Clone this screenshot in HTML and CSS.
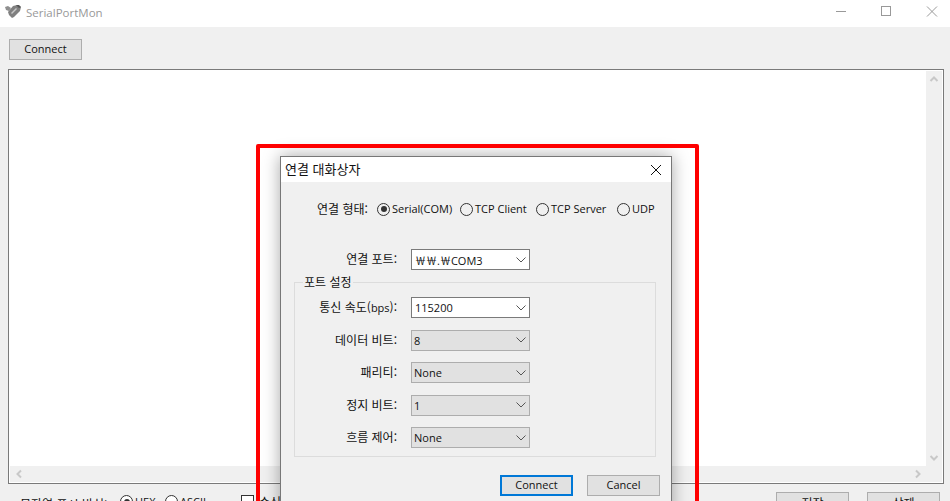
FILE: index.html
```html
<!DOCTYPE html>
<html lang="ko">
<head>
<meta charset="utf-8">
<title>SerialPortMon</title>
<link rel="stylesheet" href="styles.css">
</head>
<body>
<div class="app">
  <header class="titlebar">
    <svg class="app-icon" width="16" height="13" viewBox="0 0 16 13"><path d="M0 2l3-1 3 2-2 3-3-1z" fill="#8f8f8f"/><path d="M3 7l5-6 4-1 4 2-1 4-6 6-2 1-3-3z" fill="#808080"/><path d="M6 8l5-5 1 1-5 5z" fill="#c8c8c8"/><path d="M11 0l3 0 2 2-2 1z" fill="#555"/></svg>
    <span class="app-title">SerialPortMon</span>
    <div class="win-controls">
      <svg width="12" height="12" viewBox="0 0 12 12"><path d="M2 5.500h10" stroke="#999" fill="none"/></svg>
      <svg width="12" height="12" viewBox="0 0 12 12"><rect x="1.500" y="0.500" width="9" height="9" stroke="#999" fill="none"/></svg>
      <svg width="12" height="12" viewBox="0 0 12 12"><path d="M1 0.500l10 10M11 0.500l-10 10" stroke="#999" fill="none"/></svg>
    </div>
  </header>
  <div class="toolbar"><button class="btn latin">Connect</button></div>
  <div class="log">
    <div class="log-text"></div>
    <div class="vbar">
      <svg width="16" height="16" viewBox="0 0 16 16"><path d="M4.500 10l3.500-3.500 3.500 3.500" stroke="#c8c8c8" stroke-width="2" fill="none"/></svg>
      <svg width="16" height="16" viewBox="0 0 16 16"><path d="M4.500 6l3.500 3.500 3.500-3.500" stroke="#c8c8c8" stroke-width="2" fill="none"/></svg>
    </div>
    <div class="hbar">
      <svg width="16" height="16" viewBox="0 0 16 16"><path d="M10 4.500l-3.500 3.500 3.500 3.500" stroke="#c8c8c8" stroke-width="2" fill="none"/></svg>
      <svg width="16" height="16" viewBox="0 0 16 16"><path d="M6 4.500l3.500 3.500-3.500 3.500" stroke="#c8c8c8" stroke-width="2" fill="none"/></svg>
    </div>
    <div class="corner"></div>
  </div>
  <footer class="bottom">
    <span class="bottom-label">문자열 표시 방식:</span>
    <span class="radio latin bottom-hex"><i class="dot on"></i>HEX</span>
    <span class="radio latin bottom-ascii"><i class="dot"></i>ASCII</span>
    <span class="radio bottom-check"><i class="box"></i>수신</span>
    <button class="btn bottom-save">저장</button>
    <button class="btn bottom-del">삭제</button>
  </footer>
</div>

<section class="dialog">
  <div class="dlg-title">
    <span class="dlg-title-text">연결 대화상자</span>
    <svg width="12" height="12" viewBox="0 0 12 12"><path d="M1 1l10 10M11 1l-10 10" stroke="#111" fill="none"/></svg>
  </div>
  <div class="dlg-body">
    <div class="type-row">
      <span class="type-label">연결 형태:</span>
      <span class="radio latin"><i class="dot on"></i>Serial(COM)</span>
      <span class="radio latin"><i class="dot"></i>TCP Client</span>
      <span class="radio latin"><i class="dot"></i>TCP Server</span>
      <span class="radio latin"><i class="dot"></i>UDP</span>
    </div>
    <div class="field port-row">
      <label>연결 포트:</label>
      <div class="select white latin"><span><span class="won">₩₩</span>.<span class="won">₩</span>COM3</span><svg width="10" height="6" viewBox="0 0 10 6"><path d="M0.500 0.500l4.500 4.500 4.500-4.500" stroke="#555" fill="none"/></svg></div>
    </div>
    <div class="group">
      <span class="group-label">포트 설정</span>
      <div class="field">
        <label>통신 속도(<span class="latin">bps</span>):</label>
        <div class="select white latin">115200<svg width="10" height="6" viewBox="0 0 10 6"><path d="M0.500 0.500l4.500 4.500 4.500-4.500" stroke="#555" fill="none"/></svg></div>
      </div>
      <div class="field">
        <label>데이터 비트:</label>
        <div class="select latin">8<svg width="10" height="6" viewBox="0 0 10 6"><path d="M0.500 0.500l4.500 4.500 4.500-4.500" stroke="#555" fill="none"/></svg></div>
      </div>
      <div class="field">
        <label>패리티:</label>
        <div class="select latin">None<svg width="10" height="6" viewBox="0 0 10 6"><path d="M0.500 0.500l4.500 4.500 4.500-4.500" stroke="#555" fill="none"/></svg></div>
      </div>
      <div class="field">
        <label>정지 비트:</label>
        <div class="select latin">1<svg width="10" height="6" viewBox="0 0 10 6"><path d="M0.500 0.500l4.500 4.500 4.500-4.500" stroke="#555" fill="none"/></svg></div>
      </div>
      <div class="field">
        <label>흐름 제어:</label>
        <div class="select latin">None<svg width="10" height="6" viewBox="0 0 10 6"><path d="M0.500 0.500l4.500 4.500 4.500-4.500" stroke="#555" fill="none"/></svg></div>
      </div>
    </div>
    <div class="dlg-actions">
      <button class="btn latin default">Connect</button>
      <button class="btn latin">Cancel</button>
    </div>
  </div>
</section>

<div class="callout"></div>
</body>
</html>
```

FILE: styles.css
```css
* { box-sizing: border-box; }
html, body {
  margin: 0;
  height: 501px;
  overflow: hidden;
  background: #f0f0f0;
  font-family: "Noto Sans CJK KR", sans-serif;
  font-size: 12px;
  color: #111;
}
.app { display: flex; flex-direction: column; height: 530px; }
.titlebar {
  height: 27px;
  background: #fff;
  display: flex;
  align-items: center;
  padding-left: 5px;
  flex: none;
}
.app-icon { margin: 0 5px 5px 0; }
.app-title { color: #999; font-family: "Open Sans", sans-serif; font-size: 11.500px; padding-bottom: 3px; }
.win-controls { margin-left: auto; display: flex; gap: 34px; padding-right: 12px; margin-top: -3px; }
.toolbar { height: 42px; padding: 12px 0 0 9px; flex: none; }
.btn {
  width: 73px;
  height: 21px;
  padding: 0;
  background: #e1e1e1;
  border: 1px solid #adadad;
  font: inherit;
  color: #111;
  display: flex;
  align-items: center;
  justify-content: center;
}
.btn.default { border: 2px solid #0078d7; }
.btn.latin, .latin { font-family: "Open Sans", sans-serif; font-size: 11px; }
.btn.latin { padding-bottom: 2px; }
.log {
  height: 415px;
  flex: none;
  margin: 0 6px 0 8px;
  border: 1px solid #7a7a7a;
  background: #fff;
  padding: 1px;
  display: grid;
  grid-template-columns: 1fr 16px;
  grid-template-rows: 1fr 16px;
}
.vbar, .hbar, .corner { background: #f0f0f0; display: flex; justify-content: space-between; }
.vbar { flex-direction: column; }
.hbar svg:first-child { margin-left: 1px; }
.bottom { position: relative; height: 40px; flex: none; display: flex; padding-top: 8px; }
.bottom-label { margin: 3px 0 0 20px; width: 100px; }
.radio { display: inline-flex; align-items: center; gap: 2px; height: 16px; padding-bottom: 2px; }
.radio .dot, .radio .box { margin-top: 1px; }
.bottom .radio { margin-top: 2px; }
.bottom-hex { width: 45px; }
.bottom-ascii { width: 76px; }
.bottom-check { width: 100px; gap: 5px; }
.bottom-save { margin-left: auto; }
.bottom-del { margin: 0 10px 0 18px; }
.dot {
  width: 13px;
  height: 13px;
  border: 1px solid #333;
  border-radius: 50%;
  background: #fff;
  display: inline-block;
  flex: none;
  position: relative;
}
.dialog .dot { background: transparent; }
.dot.on::after {
  content: "";
  position: absolute;
  left: 2.500px;
  top: 2.500px;
  width: 6px;
  height: 6px;
  border-radius: 50%;
  background: #333;
}
.box { width: 13px; height: 13px; border: 1px solid #333; background: #fff; flex: none; }
.dialog {
  position: absolute;
  left: 280px;
  top: 156px;
  width: 392px;
  height: 360px;
  background: #f0f0f0;
  border: 1px solid #777;
  box-shadow: 0 0 16px rgba(0, 0, 0, 0.35);
}
.dlg-title {
  height: 25px;
  background: #fff;
  display: flex;
  align-items: center;
  justify-content: space-between;
  padding: 0 9px 0 4px;
  font-size: 13px;
}
.dlg-title-text { padding-bottom: 2px; }
.dlg-body { display: flex; flex-direction: column; padding: 18px 11px 0 13px; }
.type-row {
  display: grid;
  grid-template-columns: 60px 83px 76px 81px auto;
  align-items: center;
  height: 16px;
  padding-left: 23px;
}
.type-label { padding-bottom: 2px; }
.field { display: grid; grid-template-columns: 102px 119px; column-gap: 14px; align-items: center; }
.field label { text-align: right; padding-bottom: 2px; }
.port-row { margin: 33px 0 0 1px; }
.select {
  height: 21px;
  background: #e1e1e1;
  border: 1px solid #adadad;
  display: flex;
  align-items: center;
  justify-content: space-between;
  padding: 0 3px 0 2px;
}
.select.white { background: #fff; border-color: #7a7a7a; padding-left: 3px; }
.won { font-family: "Noto Sans CJK KR", sans-serif; font-feature-settings: "fwid"; }
.group {
  position: relative;
  margin-top: 12px;
  width: 362px;
  height: 175px;
  border: 1px solid #dcdcdc;
  padding: 14px 0 0 0;
  display: flex;
  flex-direction: column;
  gap: 11.500px;
}
.group-label { position: absolute; left: 8px; top: -8px; background: #f0f0f0; padding: 0 1px; line-height: 14px; }
.dlg-actions { display: flex; justify-content: flex-end; gap: 14px; margin-top: 18px; }
.callout {
  position: absolute;
  left: 256px;
  top: 144px;
  width: 443px;
  height: 380px;
  border: 4px solid #f00;
  border-radius: 2px;
}
```
